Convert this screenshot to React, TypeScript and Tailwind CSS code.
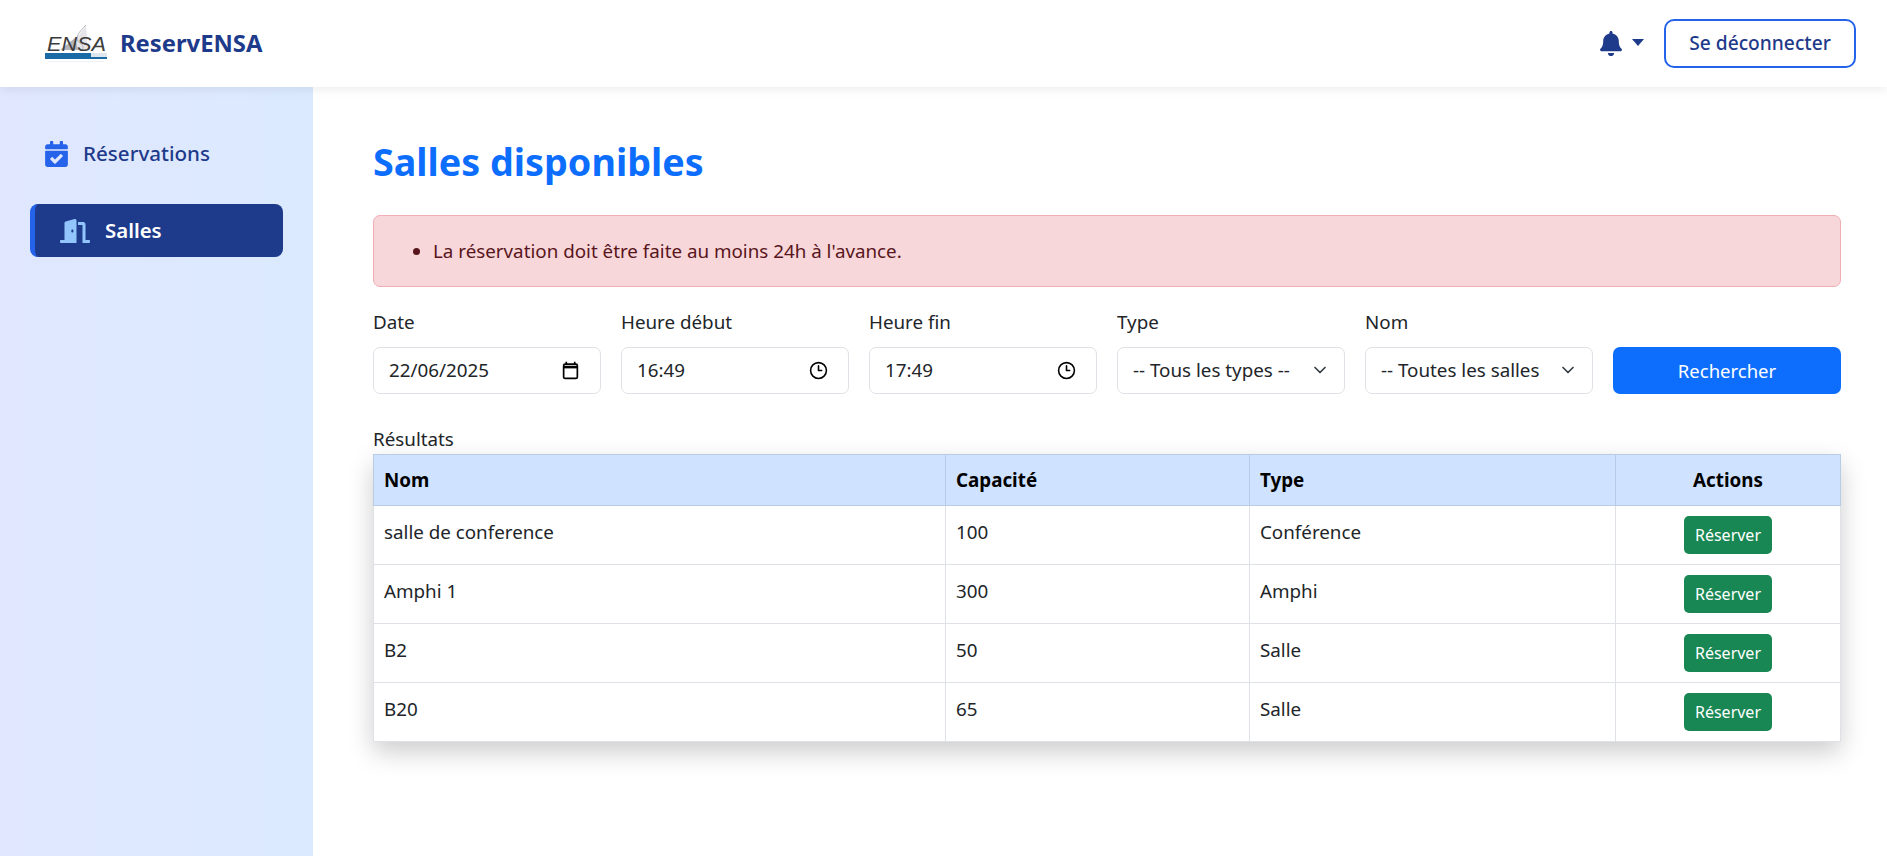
import React from 'react';
import { FaBell, FaCalendarCheck, FaDoorOpen } from 'react-icons/fa';
import { ChevronDown, Clock3 } from 'lucide-react';

const rooms = [
  { name: 'salle de conference', capacity: 100, type: 'Conférence' },
  { name: 'Amphi 1', capacity: 300, type: 'Amphi' },
  { name: 'B2', capacity: 50, type: 'Salle' },
  { name: 'B20', capacity: 65, type: 'Salle' },
];

const EnsaLogo = () => (
  <svg width="64" height="40" viewBox="0 0 64 40" className="shrink-0">
    <path d="M15 26 L34 11 L41 1 L43 26 Z" fill="#e6e6ea" />
    <path d="M15 26 L30 14 L33 26 Z" fill="#b4b4b9" />
    <path d="M41 1 C34 8 30 13 33 17 C36 21 40 21 37 26" fill="none" stroke="#a8a8ad" strokeWidth="0.8" />
    <text x="2" y="27" fontSize="21" fontStyle="italic" fontFamily="Liberation Sans" fill="#3c3c3c" textLength="59" lengthAdjust="spacingAndGlyphs">
      ENSA
    </text>
    <rect x="0" y="29" width="62" height="6" fill="#1a6aa5" />
    <rect x="46" y="29" width="16" height="4" fill="#dfe7ee" />
    <rect x="3" y="37" width="56" height="1" fill="#eef1f4" />
  </svg>
);

const DateIcon = () => (
  <svg width="19" height="19" viewBox="0 0 18 18" fill="none" className="shrink-0">
    <path d="M5 0.8v2.4M13 0.8v2.4" stroke="#000" strokeWidth="1.6" />
    <rect x="2.5" y="3" width="13" height="13.5" rx="1.4" stroke="#000" strokeWidth="1.6" />
    <path d="M2.5 4.5h13v2.5h-13z" fill="#000" />
  </svg>
);

const Field = ({ label, children }: { label: string; children: React.ReactNode }) => (
  <div>
    <label className="mb-[11px] block text-[18.8px] leading-[27px] text-[#212529]">{label}</label>
    {children}
  </div>
);

const PickerInput = ({ value, icon }: { value: string; icon: React.ReactNode }) => (
  <div className="flex h-[47px] items-center justify-between rounded-[7px] border border-[#dee2e6] bg-white pl-[15px] pr-[20px]">
    <input readOnly value={value} className="w-[130px] text-[18.8px] text-[#212529] outline-none" />
    {icon}
  </div>
);

const SelectField = ({ options }: { options: string[] }) => (
  <div className="relative">
    <select className="h-[47px] w-full appearance-none rounded-[7px] border border-[#dee2e6] bg-white pl-[15px] pr-[48px] text-[18.8px] text-[#212529] outline-none">
      {options.map(o => (
        <option key={o}>{o}</option>
      ))}
    </select>
    <ChevronDown className="pointer-events-none absolute right-[15px] top-[13px] h-[20px] w-[20px] text-[#343a40]" strokeWidth={2} />
  </div>
);

export default function App() {
  return (
    <div className="flex h-[856px] flex-col overflow-hidden bg-white font-['Noto_Sans',sans-serif] text-[#212529]">
      <header className="relative z-10 flex h-[87px] shrink-0 items-center justify-between bg-white pl-[45px] pr-[31px] shadow-[0_2px_10px_rgba(0,0,0,0.08)]">
        <div className="flex items-center gap-[11px]">
          <EnsaLogo />
          <span className="text-[23.8px] font-bold text-[#1e3a8a]">ReservENSA</span>
        </div>
        <div className="flex items-center gap-[20px]">
          <div className="flex items-center gap-[10px] text-[#1e3a8a]">
            <FaBell className="h-[25px] w-[22px]" />
            <span className="mt-[-2px] h-0 w-0 border-x-[6px] border-t-[7px] border-x-transparent border-t-[#1e3a8a]" />
          </div>
          <button className="mt-[-1px] h-[49px] w-[192px] rounded-[10px] border-2 border-[#2563eb] bg-white text-[19.2px] font-medium text-[#1e3a8a]">
            Se déconnecter
          </button>
        </div>
      </header>

      <div className="flex flex-1">
        <aside className="w-[313px] shrink-0 bg-gradient-to-r from-[#e0e7ff] to-[#dbeafe] px-[30px] pt-[40px]">
          <a className="flex h-[53px] items-center gap-[15px] pl-[15px] text-[20.6px] font-medium text-[#1e3a8a]">
            <FaCalendarCheck className="h-[26px] w-[23px] text-[#2563eb]" />
            Réservations
          </a>
          <a className="mt-[24px] flex h-[53px] items-center gap-[15px] rounded-[8px] border-l-[5px] border-[#2563eb] bg-[#1e3a8a] pl-[25px] text-[20.4px] font-semibold text-white">
            <FaDoorOpen className="h-[26px] w-[30px] text-[#93c5fd]" />
            Salles
          </a>
        </aside>

        <main className="flex-1 pl-[60px] pr-[46px] pt-[46px]">
          <h1 className="text-[37.7px] font-bold leading-[58px] text-[#0d6efd]">Salles disponibles</h1>

          <div className="mt-[24px] flex h-[72px] items-center rounded-[7px] border border-[#f1aeb5] bg-[#f8d7da] pl-[38px] text-[18.8px] text-[#58151c]">
            <ul className="list-disc pl-[21px]">
              <li>La réservation doit être faite au moins 24h à l'avance.</li>
            </ul>
          </div>

          <form className="mt-[22px] grid grid-cols-6 items-end gap-x-5">
            <Field label="Date">
              <PickerInput value="22/06/2025" icon={<DateIcon />} />
            </Field>
            <Field label="Heure début">
              <PickerInput value="16:49" icon={<Clock3 className="h-[19px] w-[19px] text-black" strokeWidth={2} />} />
            </Field>
            <Field label="Heure fin">
              <PickerInput value="17:49" icon={<Clock3 className="h-[19px] w-[19px] text-black" strokeWidth={2} />} />
            </Field>
            <Field label="Type">
              <SelectField options={['-- Tous les types --']} />
            </Field>
            <Field label="Nom">
              <SelectField options={['-- Toutes les salles --']} />
            </Field>
            <button type="button" className="h-[47px] rounded-[7px] bg-[#0d6efd] text-[18.5px] text-white">
              Rechercher
            </button>
          </form>

          <div className="mt-[32px] text-[18.8px] leading-[27px] text-[#212529]">Résultats</div>

          <table className="mt-px w-full table-fixed border-collapse bg-white text-[18.8px] shadow-[0_10px_24px_rgba(0,0,0,0.2)]">
            <colgroup>
              <col className="w-[572px]" />
              <col className="w-[304px]" />
              <col className="w-[366px]" />
              <col />
            </colgroup>
            <thead>
              <tr className="h-[51px] bg-[#cfe2ff] text-black">
                <th className="border border-[#bacbe6] px-[10px] pt-px text-left font-bold">Nom</th>
                <th className="border border-[#bacbe6] px-[10px] pt-px text-left font-bold">Capacité</th>
                <th className="border border-[#bacbe6] px-[10px] pt-px text-left font-bold">Type</th>
                <th className="border border-[#bacbe6] px-[10px] pt-px text-center font-bold">Actions</th>
              </tr>
            </thead>
            <tbody>
              {rooms.map(room => (
                <tr key={room.name} className="h-[59px]">
                  <td className="border border-[#dee2e6] px-[10px] pb-[5px]">{room.name}</td>
                  <td className="border border-[#dee2e6] px-[10px] pb-[5px]">{room.capacity}</td>
                  <td className="border border-[#dee2e6] px-[10px] pb-[5px]">{room.type}</td>
                  <td className="border border-[#dee2e6] px-[10px] text-center">
                    <button className="h-[38px] w-[88px] rounded-[5px] bg-[#198754] text-[16px] text-white">Réserver</button>
                  </td>
                </tr>
              ))}
            </tbody>
          </table>
        </main>
      </div>
    </div>
  );
}
